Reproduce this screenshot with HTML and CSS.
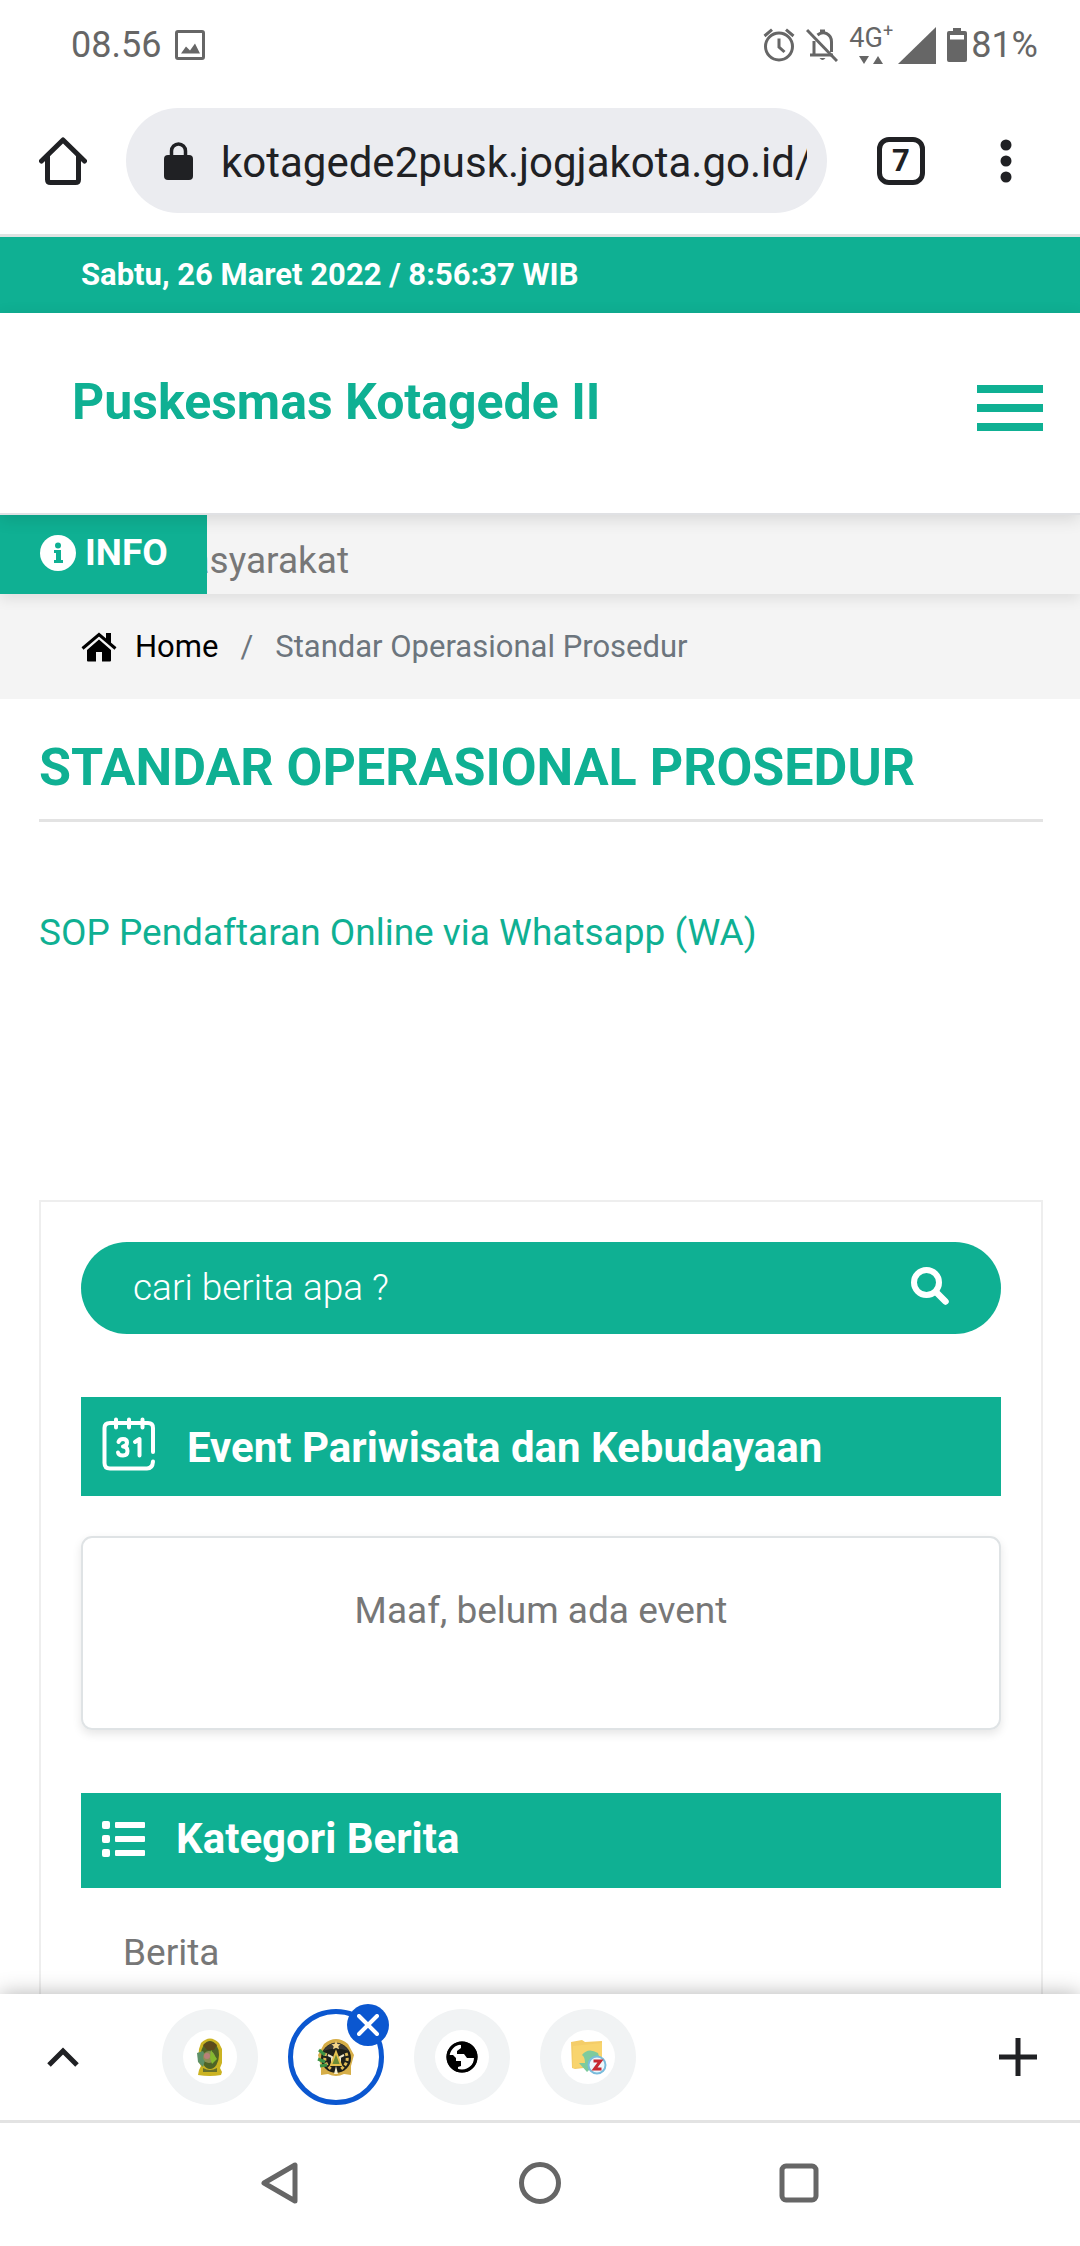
FILE: index.html
```html
<!DOCTYPE html>
<html lang="id">
<head>
<meta charset="utf-8">
<meta name="viewport" content="width=device-width, initial-scale=1">
<title>Standar Operasional Prosedur - Puskesmas Kotagede II</title>
<link rel="stylesheet" href="styles.css">
</head>
<body>
<div class="status">
  <span>08.56</span>
  <svg class="status-photo" width="30" height="30" viewBox="0 0 30 30" fill="none" stroke="currentColor" stroke-width="3"><rect x="1.5" y="1.5" width="27" height="27" rx="1.5"/><path d="M6 23.500l5-7 4 4 5-7 5 10z" fill="currentColor" stroke="none"/></svg>
  <div class="status-right">
    <svg width="32" height="34" viewBox="0 0 32 34" fill="none" stroke="currentColor" stroke-width="3"><circle cx="16" cy="18.500" r="13.500"/><path d="M16 10.500v8.500l5.500 5M1.500 8l7.500-6.300M30.500 8L23 1.700"/></svg>
    <svg width="32" height="34" viewBox="0 0 32 34" fill="none" stroke="currentColor" stroke-width="3"><path d="M4 27h23M8 27V13M11.500 7c6-5 14-1 14 7v10"/><path d="M14 4V1.500h5V4z" fill="currentColor" stroke="none"/><path d="M13.500 30h6q-3 4-6 0z" fill="currentColor" stroke="none"/><path d="M1 2l30 31"/></svg>
    <div class="signal">
      <span class="net"><span class="net-label">4G<sup>+</sup></span><svg width="24" height="8" viewBox="0 0 24 8" fill="currentColor"><path d="M0 0h10L5 8zM14 8h10L19 0z"/></svg></span>
      <svg width="38" height="37" viewBox="0 0 38 37" fill="currentColor"><path d="M38 0v37H0z"/></svg>
    </div>
    <span class="battery"><svg width="20" height="34" viewBox="0 0 20 34" fill="currentColor" fill-rule="evenodd"><path d="M6 0h8v3h4a2 2 0 0 1 2 2v27a2 2 0 0 1-2 2H2a2 2 0 0 1-2-2V5a2 2 0 0 1 2-2h4zM3 7v4.500h14V7z"/></svg>81%</span>
  </div>
</div>

<div class="browser">
  <button class="icon-btn" aria-label="Beranda"><svg width="48" height="48" viewBox="0 0 48 48" fill="none" stroke="currentColor" stroke-width="5" stroke-linecap="round" stroke-linejoin="round"><path d="M2.500 24L24 3l21.500 21M8.500 19v23.500q0 3 3 3h25q3 0 3-3V19"/></svg></button>
  <div class="omnibox">
    <svg width="29" height="38" viewBox="0 0 29 38"><rect y="13" width="29" height="25" rx="4" fill="currentColor"/><path d="M7.500 15V9a7 7 0 0 1 14 0v6" fill="none" stroke="currentColor" stroke-width="3.500"/></svg>
    <input type="text" aria-label="Alamat situs" value="kotagede2pusk.jogjakota.go.id/">
  </div>
  <button class="tabs-btn" aria-label="7 tab terbuka">7</button>
  <button class="icon-btn" aria-label="Menu lainnya"><svg width="12" height="44" viewBox="0 0 12 44" fill="currentColor"><circle cx="6" cy="6" r="5.500"/><circle cx="6" cy="22" r="5.500"/><circle cx="6" cy="38" r="5.500"/></svg></button>
</div>

<div class="datebar">Sabtu, 26 Maret 2022 / 8:56:37 WIB</div>
<header class="site-header">
  <a class="brand" href="#">Puskesmas Kotagede II</a>
  <button class="burger" aria-label="Buka menu"><span></span><span></span><span></span></button>
</header>
<div class="newsbar">
  <div class="newsbar-label"><svg width="36" height="36" viewBox="0 0 36 36"><circle cx="18" cy="18" r="18" fill="#fff"/><path d="M14 15h7v10h2v3h-9v-3h2v-7h-2z" fill="#0fb093"/><circle cx="18" cy="10.500" r="3" fill="#0fb093"/></svg>INFO</div>
  <div class="newsbar-track"><span class="newsbar-text">Masyarakat</span></div>
</div>
<nav class="crumbs" aria-label="Breadcrumb">
  <a href="#"><svg width="36" height="30" viewBox="0 0 36 30" fill="currentColor"><path d="M18 7.500L30 18v10.500q0 1-1 1h-8V20h-6v9.500H7q-1 0-1-1V18z"/><path d="M1.500 16.500L18 2.500l16.500 14" fill="none" stroke="currentColor" stroke-width="3"/><path d="M25 1h5v11l-5-4z"/></svg>Home</a>
  <span>/</span>
  <span>Standar Operasional Prosedur</span>
</nav>
<main class="content">
  <h1>STANDAR OPERASIONAL PROSEDUR</h1>
  <a class="doc-link" href="#">SOP Pendaftaran Online via Whatsapp (WA)</a>
  <aside class="sidebar">
    <form class="search">
      <input type="text" aria-label="Cari berita" placeholder="cari berita apa ?">
      <button class="icon-btn" aria-label="Cari"><svg width="38" height="38" viewBox="0 0 38 38" fill="none" stroke="currentColor"><circle cx="15.500" cy="15.500" r="12.500" stroke-width="6"/><path d="M25.500 25.500l9 9" stroke-width="6.500" stroke-linecap="round"/></svg></button>
    </form>
    <h2 class="panel-title panel-title-event"><svg width="54" height="54" viewBox="0 0 54 54" fill="none" stroke="currentColor" stroke-width="4" stroke-linecap="round" stroke-linejoin="round"><path d="M51 35V11q0-5-5-5H8Q2.500 6 2.500 11v35q0 5.500 5.500 5.500h37q5.500 0 6-7M14 2.500v8M27 2.500v8M40.500 2.500v8"/><path d="M16.500 25q1-3 4.500-3 4 0 4 3.500t-4 4q4.500 0 4.500 4.500t-4.500 4.500-5-3M33 25l4.500-3v16.500"/></svg>Event Pariwisata dan Kebudayaan</h2>
    <div class="event-card">Maaf, belum ada event</div>
    <h2 class="panel-title"><svg width="43" height="36" viewBox="0 0 43 36" fill="currentColor"><rect width="8" height="8" rx="2"/><rect y="14" width="8" height="8" rx="2"/><rect y="28" width="8" height="8" rx="2"/><rect x="13" y="1" width="30" height="6" rx="1"/><rect x="13" y="15" width="30" height="6" rx="1"/><rect x="13" y="29" width="30" height="6" rx="1"/></svg>Kategori Berita</h2>
    <a class="category" href="#">Berita</a>
  </aside>
</main>

<div class="tabstrip">
  <button class="icon-btn" aria-label="Tampilkan semua tab"><svg width="32" height="20" viewBox="0 0 32 20" fill="none" stroke="currentColor" stroke-width="5"><path d="M2 18L16 4l14 14"/></svg></button>
  <div class="tabs">
    <button class="tab" aria-label="Tab 1"><svg width="54" height="54" viewBox="0 0 54 54"><circle cx="27" cy="27" r="27" fill="#fff"/><path d="M18 13q9-9 18 0l3 6v14l-2 5 2 4-1 3q-11 2-23 0l1-5 2-4-3-5 1-12z" fill="#cbb322"/><ellipse cx="27" cy="25" rx="9" ry="14" fill="#4f6426"/><path d="M20 15q7-7 14 0l-3 5h-7z" fill="#5c4a1b"/><path d="M14 23l6-2 3 6-3 10-5-5z" fill="#5d9067"/><circle cx="26" cy="27" r="6" fill="#8d8f54"/><circle cx="24" cy="26" r="3" fill="#b98078"/><path d="M28 20l6 9-5 5-2-6z" fill="#84b92f"/><path d="M20 38q7 4 14 0v4H20z" fill="#69712a"/></svg></button>
    <button class="tab tab-active" aria-label="Puskesmas Kotagede II, tutup tab"><svg width="54" height="54" viewBox="0 0 54 54"><path d="M15 14Q27 4 39 14l6 11-3 11v9l-7-1q-8 4-16 0l-7 1v-9l-3-11z" fill="#d6ae48"/><circle cx="27" cy="28" r="15" fill="#1e2019"/><path d="M14 21q13-17 26 0-13-5-26 0z" fill="#3b3a36"/><path d="M27 11l1.500 3 3 .3-2.200 2 .7 3-3-1.500-3 1.500.7-3-2.200-2 3-.3z" fill="#f4d58a"/><path d="M17 23q-4 9 5 16M37 23q4 9-5 16" fill="none" stroke="#dfba57" stroke-width="3" stroke-dasharray="3 2"/><path d="M10 20l6 5M9 29l7 3M11 36l7-1" stroke="#3c9344" stroke-width="3"/><path d="M19 25l4 2v5M35 25l-4 2v5" fill="none" stroke="#eee8cb" stroke-width="2"/><path d="M27 22l5 13H22z" fill="#6b8c36" stroke="#e4c14e" stroke-width="2"/><path d="M27 36l2 8h-4z" fill="#f7efcc"/></svg><span class="tab-close"><svg width="22" height="22" viewBox="0 0 22 22" fill="none" stroke="#fff" stroke-width="4" stroke-linecap="round"><path d="M2 2l18 18M20 2L2 20"/></svg></span></button>
    <button class="tab" aria-label="Tab 3"><svg width="54" height="54" viewBox="0 0 54 54"><circle cx="27" cy="27" r="27" fill="#fff"/><circle cx="27" cy="27" r="15.500" fill="#000"/><path d="M14 25q1-8 9-11l3 1v3l-4 3v3h7l3 4h7q0 9-9 12-4 1-7 0v-3l3-1v-5h-5v-3l-3-3z" fill="#fff"/><circle cx="27" cy="27" r="14" fill="none" stroke="#000" stroke-width="3"/></svg></button>
    <button class="tab" aria-label="Tab 4"><svg width="54" height="54" viewBox="0 0 54 54"><circle cx="27" cy="27" r="27" fill="#fff"/><path d="M10 12l11-2 3 2 17-1v25l-27 3-3-1z" fill="#f4cd68"/><path d="M12 16l29-3v22l-29 3z" fill="#f8d46d"/><path d="M21 25q6-8 16-2l3 10h-9v4l-5 5-8-9h6q0-6-3-8z" fill="#7ecb9d"/><circle cx="36" cy="35" r="8.500" fill="#edf7fc" stroke="#79bcdc" stroke-width="2"/><path d="M32.500 31h7l-6 8h7" fill="none" stroke="#c62a31" stroke-width="3"/></svg></button>
  </div>
  <button class="icon-btn" aria-label="Tab baru"><svg width="38" height="38" viewBox="0 0 38 38" stroke="currentColor" stroke-width="5"><path d="M19 0v38M0 19h38"/></svg></button>
</div>
<div class="sysnav">
  <button class="icon-btn" aria-label="Kembali"><svg width="44" height="44" viewBox="0 0 44 44" fill="none" stroke="currentColor" stroke-width="5" stroke-linejoin="round"><path d="M5 22L36 4v36z"/></svg></button>
  <button class="icon-btn" aria-label="Layar utama"><svg width="44" height="44" viewBox="0 0 44 44" fill="none" stroke="currentColor" stroke-width="5"><circle cx="22" cy="22" r="18.500"/></svg></button>
  <button class="icon-btn" aria-label="Aplikasi terbaru"><svg width="44" height="44" viewBox="0 0 44 44" fill="none" stroke="currentColor" stroke-width="5"><rect x="5" y="5" width="34" height="34" rx="4"/></svg></button>
</div>
</body>
</html>
```
FILE: styles.css
```css
:root {
  --green: #0fb093;
  --ink: #202124;
  --grey: #666;
  --muted: #777;
}

* {
  box-sizing: border-box;
}

body {
  margin: 0;
  min-height: 100vh;
  display: flex;
  flex-direction: column;
  background: #fff;
  color: var(--muted);
  font-family: Roboto, "Liberation Sans", sans-serif;
  font-size: 37px;
  line-height: 48px;
}

svg {
  display: block;
  flex: none;
}

a {
  color: inherit;
  text-decoration: none;
}

h1,
h2 {
  margin: 0;
}

button,
input {
  margin: 0;
  padding: 0;
  border: 0;
  background: none;
  color: inherit;
  font: inherit;
}

.icon-btn {
  display: flex;
  flex: none;
}

/* Android status bar */
.status {
  display: flex;
  align-items: center;
  height: 90px;
  padding: 0 42px 0 71px;
  color: var(--grey);
  font-size: 36px;
  line-height: 50px;
}

.status-photo {
  margin-left: 14px;
}

.status-right {
  display: flex;
  align-items: center;
  gap: 11px;
  margin-left: auto;
}

.signal {
  display: flex;
  align-items: center;
  gap: 5px;
}

.net {
  display: flex;
  flex-direction: column;
  align-items: center;
  gap: 6px;
}

.net-label {
  font-size: 27px;
  line-height: 24px;
}

.net-label sup {
  font-size: 18px;
  line-height: 0;
}

.battery {
  display: flex;
  align-items: center;
  gap: 4px;
}

/* Browser toolbar */
.browser {
  display: flex;
  align-items: center;
  height: 147px;
  padding: 0 68px 3px 39px;
  border-bottom: 3px solid #dfe3e2;
  color: var(--ink);
}

.omnibox {
  display: flex;
  flex: 1;
  align-items: center;
  gap: 28px;
  min-width: 0;
  height: 105px;
  margin: 0 50px 0 39px;
  padding: 0 20px 0 38px;
  border-radius: 53px;
  background: #ebecf0;
}

.omnibox input {
  flex: 1;
  min-width: 0;
  padding-top: 4px;
  font-size: 42px;
}

.tabs-btn {
  width: 48px;
  height: 48px;
  margin-right: 75px;
  border: 5px solid;
  border-radius: 12px;
  font-size: 31px;
  font-weight: 700;
  line-height: 36px;
}

/* Site header */
.datebar {
  padding: 14px 81px;
  background: var(--green);
  color: #fff;
  font-size: 31px;
  font-weight: 700;
}

.site-header {
  position: relative;
  z-index: 1;
  display: flex;
  align-items: center;
  justify-content: space-between;
  height: 202px;
  padding: 0 37px 10px 72px;
  border-bottom: 2px solid #e0e1e4;
  background: #fff;
  box-shadow: 0 4px 16px rgba(0, 0, 0, 0.12);
}

.brand {
  padding-bottom: 12px;
  color: var(--green);
  font-size: 50px;
  font-weight: 700;
}

.burger {
  display: flex;
  flex-direction: column;
  gap: 11px;
  width: 66px;
}

.burger span {
  height: 8px;
  background: var(--green);
}

.newsbar {
  position: relative;
  display: flex;
  height: 79px;
  background: #f4f4f4;
  box-shadow: 0 6px 12px rgba(0, 0, 0, 0.08);
}

.newsbar-label {
  display: flex;
  align-items: center;
  gap: 9px;
  width: 207px;
  padding: 0 0 3px 40px;
  background: var(--green);
  color: #fff;
  font-weight: 700;
}

.newsbar-track {
  display: flex;
  justify-content: flex-end;
  align-items: center;
  width: 142px;
  padding-top: 13px;
  overflow: hidden;
}

.crumbs {
  display: flex;
  align-items: center;
  gap: 22px;
  height: 105px;
  padding: 0 81px;
  background: #f4f4f4;
  color: #6c757d;
  font-size: 31px;
}

.crumbs a {
  display: flex;
  align-items: center;
  gap: 18px;
  color: #000;
}

/* Page content */
.content {
  display: flex;
  flex: 1;
  flex-direction: column;
  padding: 0 37px 0 39px;
}

h1 {
  padding: 38px 0 20px;
  border-bottom: 3px solid #e3e3e3;
  color: var(--green);
  font-size: 52px;
  line-height: 62px;
}

.doc-link {
  margin: 87px 0 243px;
  color: var(--green);
}

.sidebar {
  display: flex;
  flex: 1;
  flex-direction: column;
  padding: 40px;
  padding-bottom: 0;
  border: 2px solid #eee;
  border-bottom: 0;
}

.search {
  display: flex;
  align-items: center;
  height: 92px;
  margin-bottom: 63px;
  padding: 0 52px;
  border-radius: 46px;
  background: var(--green);
  color: #fff;
}

.search input {
  flex: 1;
  min-width: 0;
  font-weight: 300;
}

.search .icon-btn {
  padding-bottom: 4px;
}

.search input::placeholder {
  color: #fff;
  opacity: 1;
}

.panel-title {
  display: flex;
  align-items: center;
  gap: 31px;
  padding: 18px 21px 22px;
  background: var(--green);
  color: #fff;
  font-size: 42px;
  line-height: 55px;
}

.panel-title-event {
  align-items: flex-start;
  padding: 20px 21px 18px;
  line-height: 61px;
}

.event-card {
  margin: 40px 0 63px;
  padding: 49px 20px 93px;
  border: 2px solid #dfe3e5;
  border-radius: 11px;
  box-shadow: 0 4px 10px rgba(0, 0, 0, 0.1);
  text-align: center;
}

.category {
  padding: 41px 42px 17px;
}

/* Browser tab strip */
.tabstrip {
  position: relative;
  display: flex;
  align-items: center;
  height: 129px;
  padding: 0 43px 0 47px;
  border-bottom: 3px solid #e3e3e3;
  background: #fff;
  box-shadow: 0 0 20px rgba(0, 0, 0, 0.3);
  color: var(--ink);
}

.tabs {
  display: flex;
  flex: 1;
  gap: 30px;
  margin-left: 83px;
}

.tab {
  position: relative;
  display: flex;
  align-items: center;
  justify-content: center;
  width: 96px;
  height: 96px;
  border-radius: 50%;
  background: #f1f3f4;
}

.tab-active {
  border: 5px solid #0b57d0;
  background: #fff;
}

.tab-close {
  position: absolute;
  top: -10px;
  right: -10px;
  display: flex;
  align-items: center;
  justify-content: center;
  width: 42px;
  height: 42px;
  border-radius: 50%;
  background: #0b57d0;
}

/* Android navigation */
.sysnav {
  position: relative;
  display: flex;
  align-items: center;
  justify-content: space-between;
  height: 123px;
  padding: 0 259px 3px;
  background: #fff;
  color: var(--grey);
}
```
